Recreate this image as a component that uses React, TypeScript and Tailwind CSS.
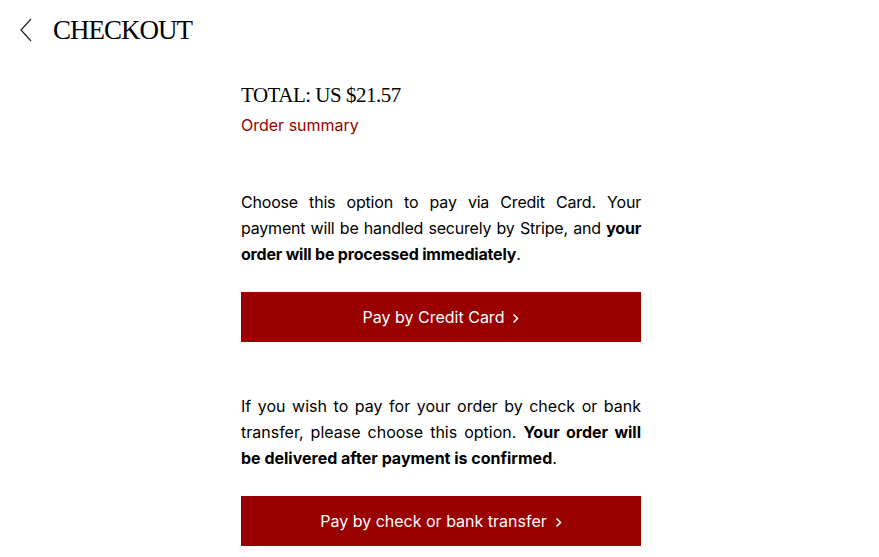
import React from 'react';

function Chevron() {
  return (
    <svg width="7" height="11" viewBox="0 0 7 11" fill="none" className="ml-2 mt-[2px]">
      <path d="M1.5 1.5 L5.5 5.5 L1.5 9.5" stroke="white" strokeWidth="1.6" />
    </svg>
  );
}

function PayButton({ label }: { label: string }) {
  return (
    <button className="flex h-[50px] w-full items-center justify-center bg-[#990000] text-base text-white">
      <span>{label}</span>
      <Chevron />
    </button>
  );
}

export default function App() {
  const serif = { fontFamily: '"Liberation Serif", "DejaVu Serif", serif' };
  return (
    <div className="min-h-screen bg-white text-black" style={{ fontFamily: 'Inter, "Open Sans", sans-serif' }}>
      <header className="flex h-[60px] items-center pl-[20px]">
        <svg width="12" height="24" viewBox="0 0 12 24" fill="none">
          <path d="M11 1 L1 12 L11 23" stroke="#222" strokeWidth="1.2" />
        </svg>
        <h1 className="ml-[21px] text-[27px] leading-none tracking-[-1px]" style={serif}>CHECKOUT</h1>
      </header>

      <main className="ml-[241px] w-[400px] pt-[20px] pb-10">
        <h2 className="text-[21px] leading-[30px] tracking-[-0.5px]" style={serif}>TOTAL: US $21.57</h2>
        <a className="mt-[3px] block text-base leading-[24px] text-[#990000]">Order summary</a>

        <p className="mt-[52px] text-justify text-base leading-[26px] tracking-[-0.2px]">
          Choose this option to pay via Credit Card. Your payment will be handled securely by Stripe, and{' '}
          <b>your order will be processed immediately</b>.
        </p>
        <div className="mt-[25px]">
          <PayButton label="Pay by Credit Card" />
        </div>

        <p className="mt-[51px] text-justify text-base leading-[26px]">
          If you wish to pay for your order by check or bank transfer, please choose this option.{' '}
          <b>Your order will be delivered after payment is confirmed</b>.
        </p>
        <div className="mt-[25px]">
          <PayButton label="Pay by check or bank transfer" />
        </div>
      </main>
    </div>
  );
}
